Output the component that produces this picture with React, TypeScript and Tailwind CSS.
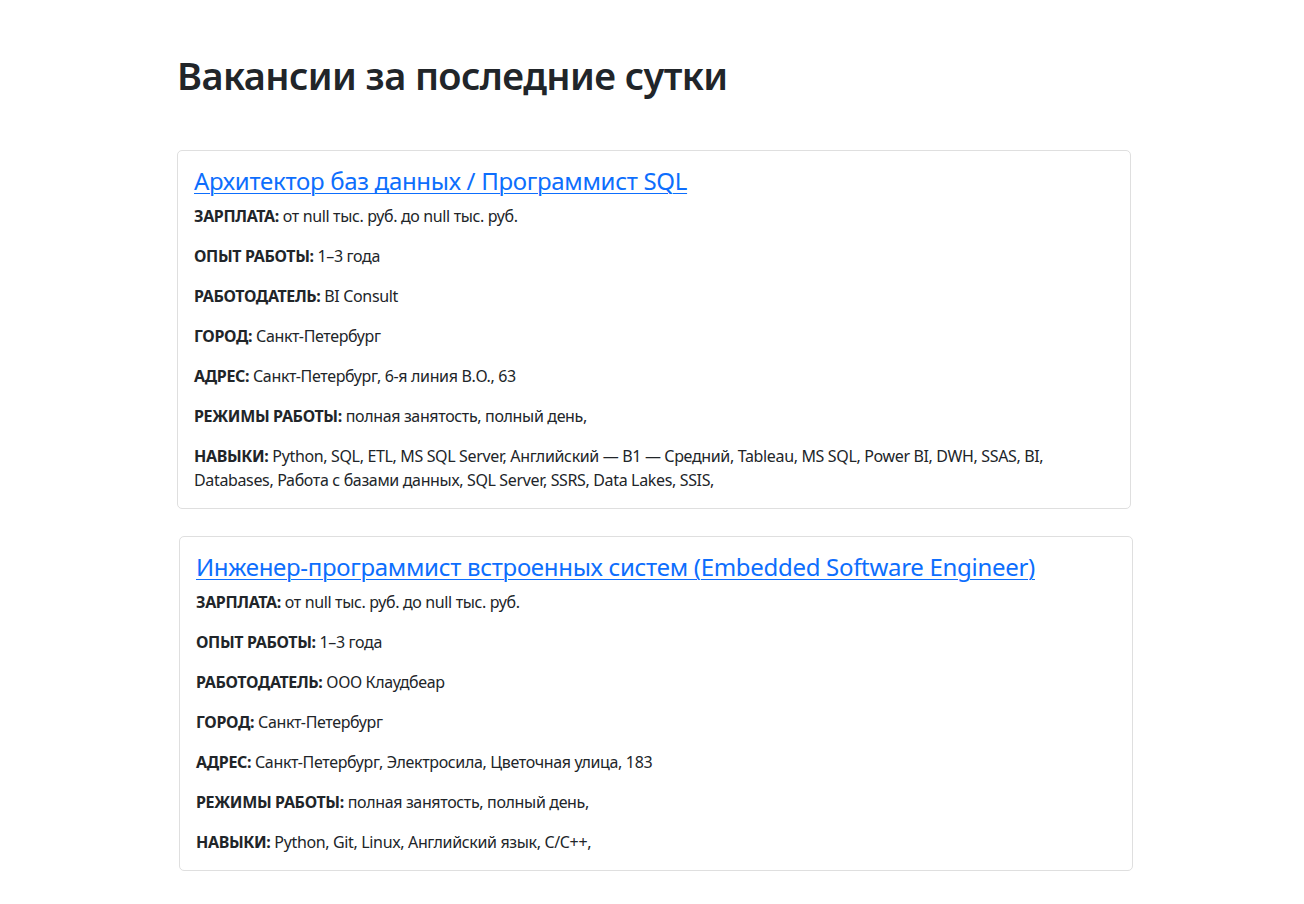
import React from "react";

type Vac = {
  title: string;
  rows: [string, string][];
};

const vacancies: Vac[] = [
  {
    title: "Архитектор баз данных / Программист SQL",
    rows: [
      ["ЗАРПЛАТА:", "от null тыс. руб. до null тыс. руб."],
      ["ОПЫТ РАБОТЫ:", "1–3 года"],
      ["РАБОТОДАТЕЛЬ:", "BI Consult"],
      ["ГОРОД:", "Санкт-Петербург"],
      ["АДРЕС:", "Санкт-Петербург, 6-я линия В.О., 63"],
      ["РЕЖИМЫ РАБОТЫ:", "полная занятость, полный день,"],
      [
        "НАВЫКИ:",
        "Python, SQL, ETL, MS SQL Server, Английский — B1 — Средний, Tableau, MS SQL, Power BI, DWH, SSAS, BI, Databases, Работа с базами данных, SQL Server, SSRS, Data Lakes, SSIS,",
      ],
    ],
  },
  {
    title: "Инженер-программист встроенных систем (Embedded Software Engineer)",
    rows: [
      ["ЗАРПЛАТА:", "от null тыс. руб. до null тыс. руб."],
      ["ОПЫТ РАБОТЫ:", "1–3 года"],
      ["РАБОТОДАТЕЛЬ:", "ООО Клаудбеар"],
      ["ГОРОД:", "Санкт-Петербург"],
      ["АДРЕС:", "Санкт-Петербург, Электросила, Цветочная улица, 183"],
      ["РЕЖИМЫ РАБОТЫ:", "полная занятость, полный день,"],
      ["НАВЫКИ:", "Python, Git, Linux, Английский язык, C/C++,"],
    ],
  },
];

function Card({ v, className }: { v: Vac; className: string }) {
  return (
    <div className={"w-[954px] border border-[#dfdfdf] rounded-[5px] p-4 " + className}>
      <h4 className="text-[24px] leading-[28.8px] font-normal tracking-[-0.3px] mb-2">
        <a href="#" className="text-[#0d6efd] underline underline-offset-[3px] decoration-1">
          {v.title}
        </a>
      </h4>
      {v.rows.map(([k, val], i) => (
        <p key={i} className="text-[16px] leading-6 mb-4 last:mb-0 tracking-[-0.35px]">
          <b className="font-bold">{k}</b> {val}
        </p>
      ))}
    </div>
  );
}

export default function App() {
  return (
    <div
      className="min-h-[904px] bg-white text-[#212529] pl-[177px] pt-[51px]"
      style={{ fontFamily: '"Segoe UI", "Noto Sans", "Liberation Sans", sans-serif' }}
    >
      <h1 className="text-[38px] leading-[48px] font-semibold tracking-[-0.6px] mb-[51px]">
        Вакансии за последние сутки
      </h1>
      <Card v={vacancies[0]} className="" />
      <Card v={vacancies[1]} className="mt-[27px] ml-[2px]" />
    </div>
  );
}
